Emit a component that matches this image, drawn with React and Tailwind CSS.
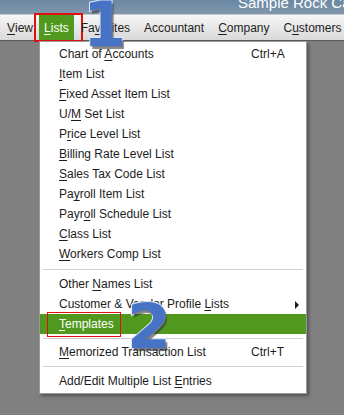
import React from 'react';

const menuBar = [
    { label: 'View', key: 0 },
    { label: 'Lists', key: 0, active: true },
    { label: 'Favorites', key: 2 },
    { label: 'Accountant', key: -1 },
    { label: 'Company', key: 0 },
    { label: 'Customers', key: 1 },
];

const groups = [
    [
        { label: 'Chart of Accounts', key: 9, shortcut: 'Ctrl+A' },
        { label: 'Item List', key: 0 },
        { label: 'Fixed Asset Item List', key: 0 },
        { label: 'U/M Set List', key: 2 },
        { label: 'Price Level List', key: 1 },
        { label: 'Billing Rate Level List', key: 0 },
        { label: 'Sales Tax Code List', key: 0 },
        { label: 'Payroll Item List', key: 2 },
        { label: 'Payroll Schedule List', key: 4 },
        { label: 'Class List', key: 0 },
        { label: 'Workers Comp List', key: 0 },
    ],
    [
        { label: 'Other Names List', key: 6 },
        { label: 'Customer & Vendor Profile Lists', key: 26, submenu: true },
        { label: 'Templates', key: 0, selected: true },
    ],
    [{ label: 'Memorized Transaction List', key: 0, shortcut: 'Ctrl+T' }],
    [{ label: 'Add/Edit Multiple List Entries', key: 23 }],
];

// underline the access-key letter
function Mnemonic({ text, index }) {
    if (index < 0) return text;
    return (
        <>
            {text.slice(0, index)}
            <span className="underline underline-offset-[2px]">{text[index]}</span>
            {text.slice(index + 1)}
        </>
    );
}

function Row({ item }) {
    return (
        <div
            className={`relative flex items-center h-[20px] pl-[19px] ${
                item.selected ? 'bg-[#51991e] text-white' : 'text-[#1c1c1c]'
            }`}
        >
            <span className="min-w-[192px] whitespace-nowrap">
                <Mnemonic text={item.label} index={item.key} />
            </span>
            {item.shortcut && <span>{item.shortcut}</span>}
            {item.submenu && (
                <span className="absolute right-[7px] top-[7px] w-0 h-0 border-y-[4px] border-y-transparent border-l-[4px] border-l-[#1c1c1c]" />
            )}
            {item.selected && (
                <span className="absolute left-[7px] top-[-2px] w-[74px] h-[25px] border border-[#e01010]" />
            )}
        </div>
    );
}

function BigNumber({ value, className }) {
    return (
        <span
            className={`absolute font-['DejaVu_Sans',sans-serif] font-bold leading-none text-[#4673c5] [-webkit-text-stroke:2px_#dbe5f6] [paint-order:stroke_fill] [text-shadow:2px_3px_1px_rgba(50,50,60,0.6)] ${className}`}
        >
            {value}
        </span>
    );
}

export default function App() {
    return (
        <div className="relative w-[344px] h-[415px] overflow-hidden bg-[#808080] font-['Liberation_Sans',Arial,sans-serif] text-[12px]">
            <div className="h-[14px] overflow-hidden bg-gradient-to-b from-[#6a87a3] to-[#8197ad] pl-[238px]">
                <div className="-mt-[6px] text-[15px] leading-[18px] text-white whitespace-nowrap">
                    Sample Rock Castle Construction
                </div>
            </div>

            <div className="flex h-[27px] items-center bg-gradient-to-b from-[#f6f6f6] to-[#d9d9d9] border-t border-[#c4c9ce] border-b border-b-[#5a5a5a] text-[#1e1e1e]">
                {menuBar.map((m, i) => (
                    <div
                        key={m.label}
                        className={`relative flex items-center h-full whitespace-nowrap ${
                            m.active
                                ? 'bg-[#51991e] text-white px-[5px] w-[38px]'
                                : i === 0
                                  ? 'pl-[7px] pr-[6px]'
                                  : 'px-[7px]'
                        }`}
                    >
                        <Mnemonic text={m.label} index={m.key} />
                        {m.active && (
                            <span className="absolute left-[-5px] top-[-2px] w-[49px] h-[29px] border-2 border-[#e01010]" />
                        )}
                    </div>
                ))}
            </div>

            <div className="absolute left-[39px] top-[41px] w-[268px] bg-white border border-[#9a9a9a] shadow-[2px_2px_3px_rgba(0,0,0,0.35)] pt-[2px] pb-[2px]">
                {groups.map((g, gi) => (
                    <div key={gi}>
                        {gi > 0 && (
                            <div className={`flex items-center mx-[3px] ${gi === 1 ? 'h-[10px]' : gi === 2 ? 'h-[8px]' : 'h-[9px]'}`}>
                                <div className="w-full h-[1px] bg-[#cfcfcf]" />
                            </div>
                        )}
                        {g.map((item) => (
                            <Row key={item.label} item={item} />
                        ))}
                    </div>
                ))}
            </div>

            <BigNumber value="1" className="left-[83px] top-[-6px] text-[62px]" />
            <BigNumber value="2" className="left-[127px] top-[295px] text-[63px]" />
        </div>
    );
}
